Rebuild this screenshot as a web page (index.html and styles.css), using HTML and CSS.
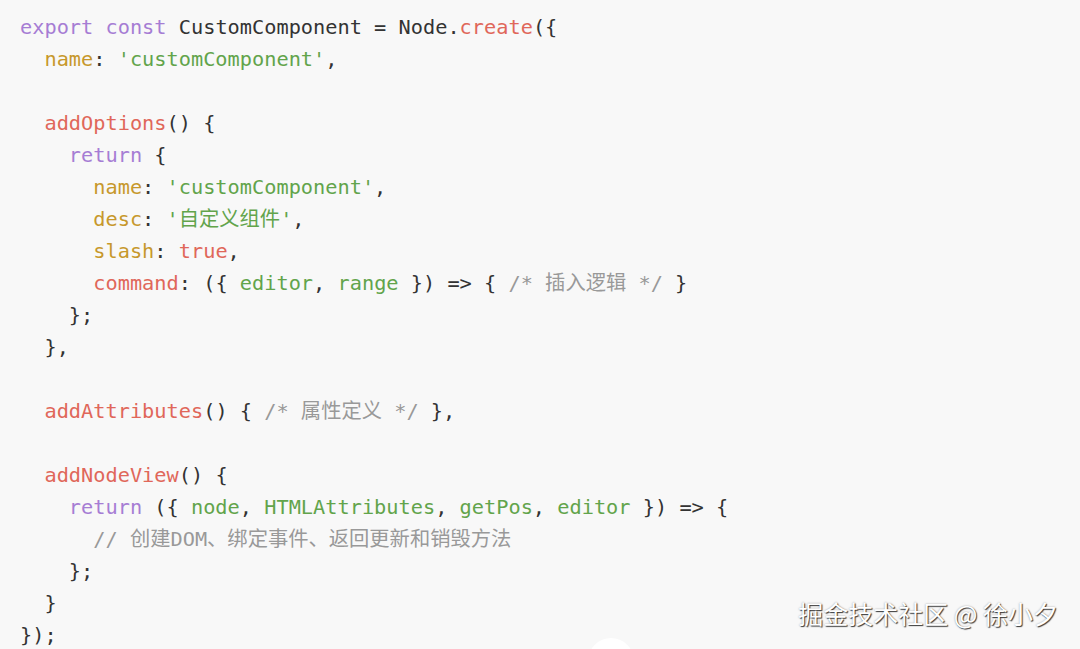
FILE: index.html
```html
<!DOCTYPE html>
<html lang="zh">
<head>
<meta charset="utf-8">
<link rel="stylesheet" href="styles.css">
</head>
<body>
<main class="code-block">
<pre class="code"><span class="kw">export</span> <span class="kw">const</span> CustomComponent = Node.<span class="fn">create</span>({
  <span class="prop">name</span>: <span class="str">'customComponent'</span>,

  <span class="fn">addOptions</span>() {
    <span class="kw">return</span> {
      <span class="prop">name</span>: <span class="str">'customComponent'</span>,
      <span class="prop">desc</span>: <span class="str">'自定义组件'</span>,
      <span class="prop">slash</span>: <span class="lit">true</span>,
      <span class="fn">command</span>: ({ <span class="param">editor</span>, <span class="param">range</span> }) =&gt; { <span class="cm">/* 插入逻辑 */</span> }
    };
  },

  <span class="fn">addAttributes</span>() { <span class="cm">/* 属性定义 */</span> },

  <span class="fn">addNodeView</span>() {
    <span class="kw">return</span> ({ <span class="param">node</span>, <span class="param">HTMLAttributes</span>, <span class="param">getPos</span>, <span class="param">editor</span> }) =&gt; {
      <span class="cm">// 创建DOM、绑定事件、返回更新和销毁方法</span>
    };
  }
});</pre>
</main>
<div class="dot"></div>
<div class="watermark">掘金技术社区 @ 徐小夕</div>
</body>
</html>
```
FILE: styles.css
```css
html, body {
  margin: 0;
  padding: 0;
  background: #f8f8f8;
  width: 1080px;
  height: 649px;
  overflow: hidden;
}
body {
  position: relative;
}
.code-block {
  height: 649px;
  box-sizing: border-box;
  padding: 11px 0 0 20px;
  overflow: hidden;
}
.code {
  margin: 0;
  font-family: "DejaVu Sans Mono", "Noto Sans CJK SC", monospace;
  font-size: 20.3px;
  line-height: 32px;
  color: #333333;
}
.kw { color: #a67dd4; }
.fn { color: #e0675a; }
.prop { color: #c7982c; }
.str { color: #62a44b; }
.param { color: #62a44b; }
.lit { color: #e0675a; }
.cm { color: #999999; }
.watermark {
  position: absolute;
  right: 22px;
  top: 596px;
  font-family: "Noto Sans CJK SC", sans-serif;
  font-size: 25px;
  line-height: 34px;
  color: #ffffff;
  text-shadow: 1px 1px 1px rgba(0,0,0,0.75), 0 0 2px rgba(0,0,0,0.35);
}
.dot {
  position: absolute;
  left: 588px;
  top: 638px;
  width: 46px;
  height: 46px;
  border-radius: 50%;
  background: #ffffff;
}
```
